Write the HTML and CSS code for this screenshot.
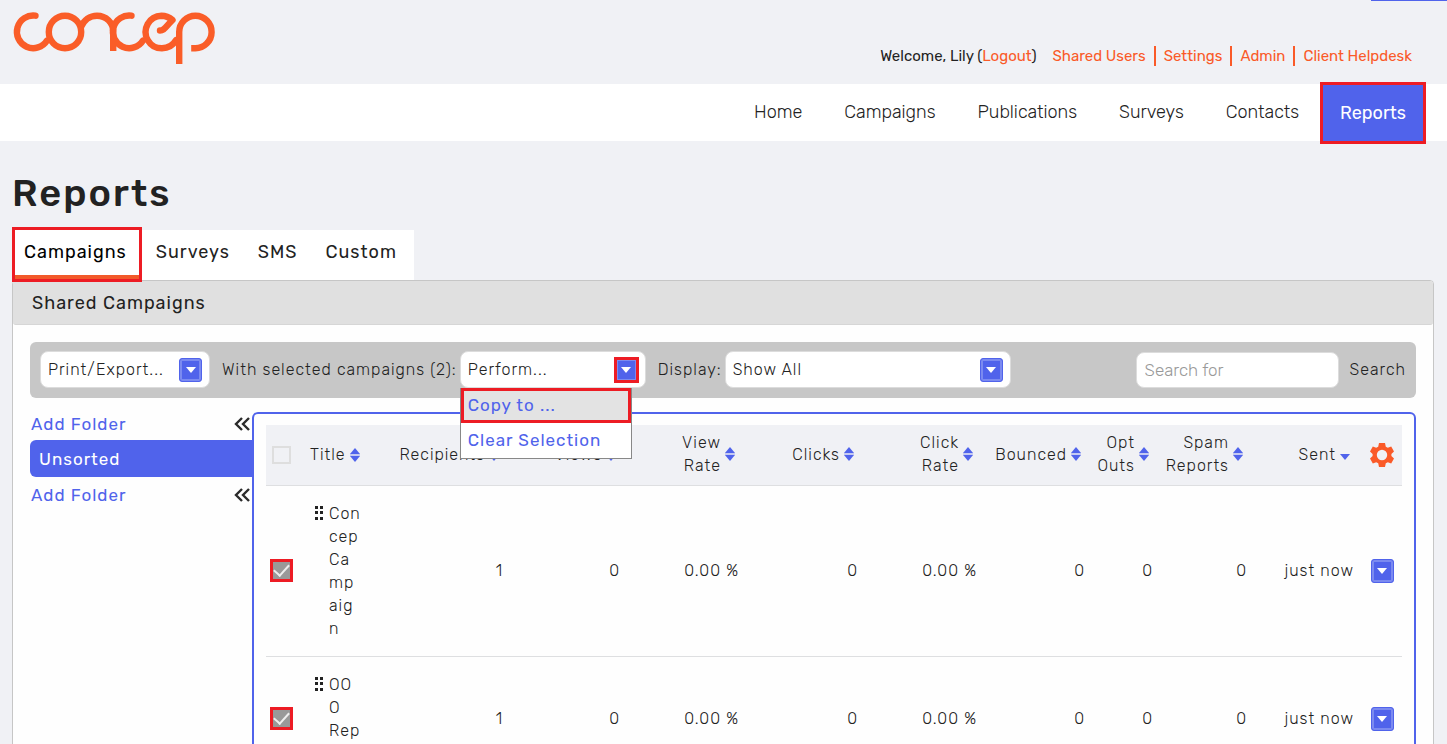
FILE: index.html
```html
<!DOCTYPE html>
<html lang="en">
<head>
    <meta charset="utf-8">
    <title>Concep - Reports</title>
    <link rel="stylesheet" href="styles.css">
</head>
<body>
    <!-- shared icons -->
    <svg class="sprite" aria-hidden="true">
        <symbol id="icon-sort" viewBox="0 0 10 14">
            <path d="M0 6 5 0l5 6z" fill="#5063eb"/>
            <path d="M0 6h10v2H0z" fill="#c5caf2"/>
            <path d="M0 8h10l-5 6z" fill="#5063eb"/>
        </symbol>
        <symbol id="icon-sort-down" viewBox="0 0 10 14">
            <path d="M0 7h10l-5 6z" fill="#5063eb"/>
        </symbol>
        <symbol id="icon-arrow" viewBox="0 0 10 6">
            <path d="M0 0h10L5 6z" fill="#fff"/>
        </symbol>
        <symbol id="icon-drag" viewBox="0 0 10 14">
            <path d="M1 0h3v3H1zM6 0h3v3H6zM1 5h3v3H1zM6 5h3v3H6zM1 11h3v3H1zM6 11h3v3H6z" fill="#222"/>
        </symbol>
        <symbol id="icon-collapse" viewBox="0 0 16 14">
            <path d="M8 1 2 7l6 6M15 1 9 7l6 6" fill="none" stroke="#2b2b2b" stroke-width="2.4"/>
        </symbol>
        <symbol id="icon-gear" viewBox="0 0 24 24">
            <path fill="#fa5a28" fill-rule="evenodd" d="M9 0h6l.8 3.700 2 1.100L21.200 3.600l2.800 5-2.600 2.400v2l2.600 2.400-2.800 5-3.400-1.200-2 1.100L15 24H9l-.8-3.700-2-1.100-3.400 1.200-2.800-5L2.600 13v-2L0 8.600l2.800-5 3.400 1.200 2-1.100zM12 6.800a5.200 5.200 0 1 0 0 10.400 5.200 5.200 0 0 0 0-10.400z"/>
        </symbol>
    </svg>

    <header class="header">
        <a class="logo" href="#" aria-label="Concep">
            <svg width="204" height="56" viewBox="12 10 204 56" fill="none" stroke="#fa5d28" stroke-width="6.400">
                <path d="M35.500 15.700A16.300 16.300 0 1 0 47 40.500" stroke-linecap="round"/>
                <circle cx="65" cy="32" r="16.200"/>
                <path d="M81 27C84 20 90 15.700 97 15.700c9 0 16.200 7 16.200 16V51"/>
                <path d="M131.500 15.700A16.300 16.300 0 1 0 143 40.500" stroke-linecap="round"/>
                <path d="M160 30.500c4 0 5-3 12.500-10.500C169 17 166 15.700 161.500 15.700a16.300 16.300 0 1 0 14.500 24.500" stroke-linecap="round" stroke-linejoin="round"/>
                <path d="M179.200 64V32a16.200 16.200 0 1 1 16 16.200h-4"/>
            </svg>
        </a>
        <div class="account">
            <span>Welcome, Lily (<a href="#">Logout</a>)</span>
            <ul class="account-links">
                <li><a href="#">Shared Users</a></li>
                <li><a href="#">Settings</a></li>
                <li><a href="#">Admin</a></li>
                <li><a href="#">Client Helpdesk</a></li>
            </ul>
        </div>
        <span class="header-tag"></span>
    </header>

    <nav class="nav">
        <a href="#">Home</a>
        <a href="#">Campaigns</a>
        <a href="#">Publications</a>
        <a href="#">Surveys</a>
        <a href="#">Contacts</a>
        <a href="#" class="active">Reports</a>
    </nav>

    <main class="main">
        <h1>Reports</h1>

        <div class="tabs">
            <a href="#" class="active">Campaigns</a>
            <a href="#">Surveys</a>
            <a href="#">SMS</a>
            <a href="#">Custom</a>
        </div>

        <section class="panel">
            <h2>Shared Campaigns</h2>
            <div class="panel-body">
                <form class="toolbar">
                    <div class="dropdown export">
                        <select aria-label="Print or export"><option>Print/Export...</option></select>
                        <span class="arrow"><svg><use href="#icon-arrow"/></svg></span>
                    </div>
                    <label for="perform">With selected campaigns (2):</label>
                    <div class="dropdown perform">
                        <select id="perform"><option>Perform...</option></select>
                        <span class="arrow marked"><svg><use href="#icon-arrow"/></svg></span>
                        <div class="menu">
                            <a href="#" class="marked">Copy to ...</a>
                            <a href="#">Clear Selection</a>
                        </div>
                    </div>
                    <label for="display">Display:</label>
                    <div class="dropdown display">
                        <select id="display"><option>Show All</option></select>
                        <span class="arrow"><svg><use href="#icon-arrow"/></svg></span>
                    </div>
                    <input class="search" type="text" placeholder="Search for" aria-label="Search for">
                    <button class="search-button" type="submit">Search</button>
                </form>

                <div class="content">
                    <aside class="folders">
                        <div class="folder-add">
                            <a href="#">Add Folder</a>
                            <button type="button" aria-label="Collapse"><svg><use href="#icon-collapse"/></svg></button>
                        </div>
                        <a href="#" class="folder">Unsorted</a>
                        <div class="folder-add">
                            <a href="#">Add Folder</a>
                            <button type="button" aria-label="Collapse"><svg><use href="#icon-collapse"/></svg></button>
                        </div>
                    </aside>

                    <div class="list">
                        <table>
                            <colgroup>
                                <col class="col-check">
                                <col class="col-title">
                                <col class="col-recipients">
                                <col class="col-views">
                                <col class="col-number">
                                <col class="col-number">
                                <col class="col-number">
                                <col class="col-bounced">
                                <col class="col-opt">
                                <col class="col-spam">
                                <col class="col-sent">
                                <col class="col-action">
                            </colgroup>
                            <thead>
                                <tr>
                                    <th class="check"><input type="checkbox" aria-label="Select all"></th>
                                    <th class="title"><div class="sort"><span>Title</span><svg><use href="#icon-sort"/></svg></div></th>
                                    <th><div class="sort"><span>Recipients</span><svg><use href="#icon-sort"/></svg></div></th>
                                    <th><div class="sort"><span>Views</span><svg><use href="#icon-sort"/></svg></div></th>
                                    <th><div class="sort"><span>View<br>Rate</span><svg><use href="#icon-sort"/></svg></div></th>
                                    <th><div class="sort"><span>Clicks</span><svg><use href="#icon-sort"/></svg></div></th>
                                    <th><div class="sort"><span>Click<br>Rate</span><svg><use href="#icon-sort"/></svg></div></th>
                                    <th><div class="sort"><span>Bounced</span><svg><use href="#icon-sort"/></svg></div></th>
                                    <th><div class="sort"><span>Opt<br>Outs</span><svg><use href="#icon-sort"/></svg></div></th>
                                    <th><div class="sort"><span>Spam<br>Reports</span><svg><use href="#icon-sort"/></svg></div></th>
                                    <th><div class="sort"><span>Sent</span><svg><use href="#icon-sort-down"/></svg></div></th>
                                    <th class="action"><button class="gear" type="button" aria-label="Columns"><svg><use href="#icon-gear"/></svg></button></th>
                                </tr>
                            </thead>
                            <tbody>
                                <tr>
                                    <td class="check"><input type="checkbox" checked aria-label="Select Concep Campaign"></td>
                                    <td class="title"><div class="name"><svg><use href="#icon-drag"/></svg><span>Concep Campaign</span></div></td>
                                    <td>1</td>
                                    <td>0</td>
                                    <td>0.00 %</td>
                                    <td>0</td>
                                    <td>0.00 %</td>
                                    <td>0</td>
                                    <td>0</td>
                                    <td>0</td>
                                    <td>just now</td>
                                    <td class="action"><button class="arrow" type="button" aria-label="Actions"><svg><use href="#icon-arrow"/></svg></button></td>
                                </tr>
                                <tr>
                                    <td class="check"><input type="checkbox" checked aria-label="Select OOO Report"></td>
                                    <td class="title"><div class="name"><svg><use href="#icon-drag"/></svg><span>OOO Report</span></div></td>
                                    <td>1</td>
                                    <td>0</td>
                                    <td>0.00 %</td>
                                    <td>0</td>
                                    <td>0.00 %</td>
                                    <td>0</td>
                                    <td>0</td>
                                    <td>0</td>
                                    <td>just now</td>
                                    <td class="action"><button class="arrow" type="button" aria-label="Actions"><svg><use href="#icon-arrow"/></svg></button></td>
                                </tr>
                            </tbody>
                        </table>
                    </div>
                </div>
            </div>
        </section>
    </main>
</body>
</html>
```
FILE: styles.css
```css
* {
    box-sizing: border-box;
}
html {
    overflow: hidden;
}
body {
    margin: 0;
    background: #f0f1f5;
    color: #222;
    font-family: Rubik, Roboto, sans-serif;
    font-size: 16px;
    font-weight: 350;
    line-height: 23px;
}
a {
    color: #5063eb;
    text-decoration: none;
}
svg {
    display: block;
}
button {
    padding: 0;
    border: 0;
    background: none;
    color: inherit;
    font: inherit;
    letter-spacing: inherit;
    cursor: pointer;
}
.sprite {
    display: none;
}

/* header */
.header {
    position: relative;
    display: flex;
    justify-content: space-between;
    height: 84px;
    padding: 10px 35px 0 12px;
}
.account {
    display: flex;
    align-items: center;
    align-self: flex-end;
    gap: 16px;
    height: 56px;
    font-size: 15px;
    font-weight: 400;
}
.account a {
    color: #fa5a28;
}
.account-links {
    display: flex;
    margin: 0;
    padding: 0;
    list-style: none;
}
.account-links li {
    line-height: 20px;
}
.account-links li + li {
    margin-left: 8px;
    padding-left: 8px;
    border-left: 2px solid #fa5a28;
}
.header-tag {
    position: absolute;
    top: 0;
    right: 0;
    width: 76px;
    height: 1px;
    background: #5063eb;
}

/* main navigation */
.nav {
    display: flex;
    justify-content: flex-end;
    align-items: center;
    height: 57px;
    padding-right: 21px;
    background: #fff;
    font-size: 18px;
}
.nav a {
    padding: 0 21px;
    color: #222;
}
.nav .active {
    padding: 0 17px;
    border: 3px solid #ed1c24;
    background: #5063eb;
    color: #fff;
    font-weight: 400;
    line-height: 56px;
}

.main {
    padding: 27px 13px 0 12px;
    letter-spacing: 1px;
}
h1 {
    margin: 0;
    font-size: 38px;
    font-weight: 500;
    line-height: 50px;
    letter-spacing: 2px;
}

/* tabs */
.tabs {
    display: flex;
    width: fit-content;
    height: 50px;
    margin-top: 12px;
    padding-right: 3px;
    background: #fff;
    font-size: 18px;
    font-weight: 400;
    line-height: 44px;
}
.tabs a {
    padding: 0 14px;
    color: #222;
}
.tabs .active {
    position: relative;
    height: 55px;
    margin-top: -3px;
    padding: 0 12px 0 9px;
    border: 3px solid #ed1c24;
    box-shadow: inset 0 -4px #f2592a;
    color: #000;
}

/* panel */
.panel {
    border: 1px solid #c6c6c6;
    border-radius: 4px;
    background: #fefefe;
}
h2 {
    margin: 0;
    padding: 2px 19px 0;
    border-bottom: 1px solid #d6d6d6;
    border-radius: 3px;
    background: #e0e0e0;
    font-size: 18px;
    font-weight: 400;
    line-height: 41px;
}
.panel-body {
    padding: 17px 17px 0;
}
.toolbar {
    display: flex;
    align-items: center;
    height: 56px;
    padding: 0 10px 1px;
    border-radius: 6px;
    background: #c7c7c7;
}
.dropdown {
    position: relative;
}
.dropdown select {
    display: block;
    width: 100%;
    height: 37px;
    padding: 0 7px;
    border: 1px solid #dcdcdc;
    border-radius: 8px;
    background: #fff;
    color: #222;
    font: inherit;
    letter-spacing: inherit;
    appearance: none;
}
.arrow {
    display: flex;
    align-items: center;
    justify-content: center;
    width: 23px;
    height: 24px;
    border: 1px solid #5063eb;
    border-radius: 3px;
    background: #5063eb;
    box-shadow: inset 0 0 0 2px #7b8af0;
}
.arrow svg {
    width: 10px;
    height: 6px;
}
.dropdown .arrow {
    position: absolute;
    top: 7px;
    right: 8px;
    pointer-events: none;
}
.dropdown .arrow.marked {
    top: 6px;
    right: 7px;
    width: 25px;
    height: 26px;
    border: 3px solid #ed1c24;
    border-radius: 0;
    box-shadow: inset 0 0 0 1px #7b8af0;
}
.export {
    width: 170px;
    margin-right: 12px;
}
.perform {
    width: 186px;
    margin: 0 12px 0 3px;
}
.display {
    width: 286px;
    margin-left: 3px;
}
.toolbar label {
    white-space: nowrap;
}
.menu {
    position: absolute;
    z-index: 1;
    top: 37px;
    left: 0;
    width: 172px;
    border: 1px solid #888;
    border-top: 0;
    background: #fff;
    font-size: 17px;
    font-weight: 400;
}
.menu a {
    display: block;
    padding: 0 7px;
    line-height: 35px;
}
.menu .marked {
    padding: 0 4px;
    border: 3px solid #ed1c24;
    background: #e3e3e3;
    line-height: 29px;
}
.search {
    width: 203px;
    height: 36px;
    margin-left: auto;
    padding: 0 8px;
    border: 1px solid #dcdcdc;
    border-radius: 8px;
    background: #fff;
    font: inherit;
    font-size: 17px;
}
.search::placeholder {
    color: #999;
}
.search-button {
    margin-left: 11px;
}

/* folders */
.content {
    display: flex;
    margin-top: 14px;
}
.folders {
    flex: none;
    width: 222px;
    font-size: 17px;
    font-weight: 400;
}
.folder-add {
    display: flex;
    align-items: center;
    justify-content: space-between;
    height: 28px;
    padding: 0 2px 4px 1px;
}
.folder-add svg {
    width: 16px;
    height: 14px;
}
.folder {
    display: block;
    margin-bottom: 6px;
    padding: 2px 0 0 9px;
    border-radius: 6px 0 0 6px;
    background: #5063eb;
    color: #fff;
    line-height: 35px;
}

/* campaign list */
.list {
    flex: 1;
    min-width: 0;
    padding: 11px 12px 24px;
    border: 2px solid #5063eb;
    border-radius: 6px;
}
table {
    width: 100%;
    border-collapse: collapse;
    table-layout: fixed;
}
.col-check { width: 31px; }
.col-title { width: 72px; }
.col-recipients { width: 142px; }
.col-views { width: 117px; }
.col-number { width: 119px; }
.col-bounced { width: 108px; }
.col-opt { width: 68px; }
.col-spam { width: 94px; }
.col-sent { width: 107px; }
.col-action { width: 40px; }
tr {
    border-bottom: 1px solid #dedfe1;
}
th {
    height: 60px;
    padding: 0 12px 1px 0;
    background: #f0f1f5;
    font-weight: 350;
}
td {
    padding: 16px 8px 16px 0;
    text-align: right;
}
.sort {
    display: flex;
    align-items: center;
    justify-content: flex-end;
    gap: 4px;
    text-align: right;
}
.sort svg {
    width: 10px;
    height: 14px;
    flex: none;
}
th.title {
    padding: 0 0 0 13px;
}
.title .sort {
    justify-content: flex-start;
}
td.title {
    padding-left: 17px;
    padding-right: 0;
    text-align: left;
}
.name {
    display: flex;
    gap: 5px;
}
.name svg {
    flex: none;
    width: 10px;
    height: 14px;
    margin-top: 4px;
}
.name span {
    width: 33px;
    overflow-wrap: anywhere;
}
.check {
    padding: 0;
    text-align: center;
}
.check input {
    display: grid;
    place-items: center;
    width: 19px;
    height: 18px;
    margin: 0 auto;
    border: 2px solid #dedede;
    appearance: none;
}
.check input:checked {
    width: 23px;
    height: 23px;
    border: 3px solid #ed1c24;
    background: #999;
}
.check input:checked::after {
    content: "";
    width: 7px;
    height: 13px;
    margin-top: -4px;
    border: solid #eee;
    border-width: 0 2px 2px 0;
    transform: rotate(42deg);
}
.action {
    padding: 0;
}
.action button {
    margin: 0 auto;
}
.gear {
    display: block;
}
.gear svg {
    width: 24px;
    height: 24px;
}
```
